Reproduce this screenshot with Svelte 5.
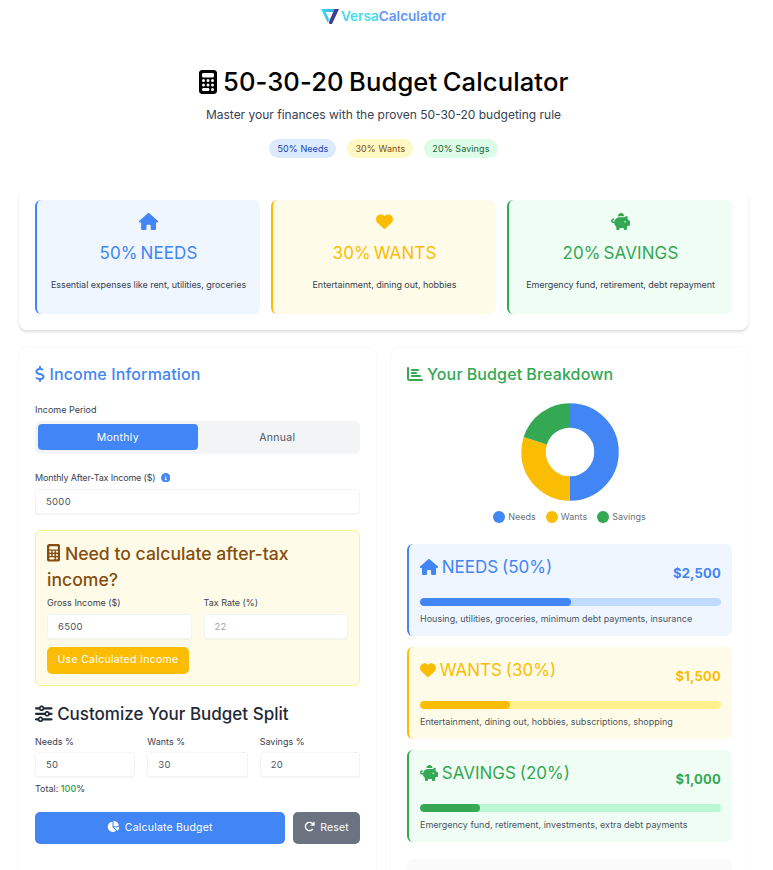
<script>
  const I = {
    calc: { v: '0 0 384 512', d: 'M64 0C28.700 0 0 28.700 0 64V448c0 35.300 28.700 64 64 64H320c35.300 0 64-28.700 64-64V64c0-35.300-28.700-64-64-64H64zM96 64H288c17.700 0 32 14.300 32 32v32c0 17.700-14.300 32-32 32H96c-17.700 0-32-14.300-32-32V96c0-17.700 14.300-32 32-32zm32 160a32 32 0 1 1 -64 0 32 32 0 1 1 64 0zM96 352a32 32 0 1 1 0-64 32 32 0 1 1 0 64zM64 416c0-17.700 14.300-32 32-32h96c17.700 0 32 14.300 32 32s-14.300 32-32 32H96c-17.700 0-32-14.300-32-32zM192 256a32 32 0 1 1 0-64 32 32 0 1 1 0 64zm32 64a32 32 0 1 1 -64 0 32 32 0 1 1 64 0zm64-64a32 32 0 1 1 0-64 32 32 0 1 1 0 64zm32 64a32 32 0 1 1 -64 0 32 32 0 1 1 64 0zM288 448a32 32 0 1 1 0-64 32 32 0 1 1 0 64z' },
    home: { v: '0 0 576 512', d: 'M575.800 255.500c0 18-15 32.100-32 32.100h-32l.7 160.200c0 2.700-.2 5.400-.5 8.100V472c0 22.100-17.900 40-40 40H456c-1.100 0-2.200 0-3.300-.1c-1.400 .1-2.800 .1-4.200 .1H416 392c-22.100 0-40-17.900-40-40V448 384c0-17.700-14.300-32-32-32H256c-17.700 0-32 14.300-32 32v64 24c0 22.100-17.900 40-40 40H160 128.100c-1.500 0-3-.1-4.500-.2c-1.200 .1-2.400 .2-3.600 .2H104c-22.100 0-40-17.900-40-40V360c0-.9 0-1.900 .1-2.800V287.600H32c-18 0-32-14-32-32.100c0-9 3-17 10-24L266.400 8c7-7 15-8 22-8s15 2 21 7L564.800 231.500c8 7 12 15 11 24z' },
    heart: { v: '0 0 512 512', d: 'M47.600 300.400L228.300 469.100c7.500 7 17.400 10.900 27.700 10.900s20.200-3.900 27.700-10.900L464.400 300.400c30.400-28.300 47.600-68 47.600-109.500v-5.800c0-69.900-50.500-129.500-119.400-141C347 36.500 300.600 51.400 268 84L256 96 244 84c-32.600-32.600-79-47.500-124.600-39.900C50.500 55.600 0 115.200 0 185.100v5.800c0 41.500 17.200 81.200 47.600 109.500z' },
    piggy: { v: '0 0 576 512', d: 'M400 96l0 .7c-5.300-.4-10.600-.7-16-.7H256c-16.500 0-32.500 2.100-47.800 6c-.1-2-.2-4-.2-6c0-53 43-96 96-96s96 43 96 96zm-16 32c3.500 0 7 .1 10.400 .3c4.200 .3 8.400 .7 12.600 1.300C424.600 109.100 450.800 96 480 96h11.500c10.400 0 18 9.800 15.500 19.900l-13.800 55.200c15.800 14.800 28.700 32.800 37.500 52.900H544c17.700 0 32 14.300 32 32v96c0 17.700-14.300 32-32 32H512c-9.100 12.100-19.900 22.900-32 32v64c0 17.700-14.300 32-32 32H416c-17.700 0-32-14.300-32-32V448H256v32c0 17.700-14.300 32-32 32H192c-17.700 0-32-14.300-32-32V416c-34.900-26.200-58.700-66.300-63.200-112H68c-37.600 0-68-30.400-68-68s30.400-68 68-68h4c13.300 0 24 10.700 24 24s-10.700 24-24 24H68c-11 0-20 9-20 20s9 20 20 20H99.200c12.100-59.800 58.700-107.500 118.300-120.900c12.100-2.700 24.800-4.100 38.500-4.100H384zm64 136a24 24 0 1 0 -48 0 24 24 0 1 0 48 0z' },
    dollar: { v: '0 0 320 512', d: 'M160 0c17.700 0 32 14.300 32 32V67.700c1.600 .2 3.100 .4 4.700 .7c.4 .1 .7 .1 1.100 .2l48 8.800c17.400 3.200 28.900 19.900 25.700 37.200s-19.900 28.900-37.200 25.700l-47.500-8.700c-31.300-4.600-58.900-1.500-78.300 6.200s-27.200 18.300-29 28.100c-2 10.700-.5 16.700 1.200 20.400c1.800 3.900 5.500 8.300 12.800 13.200c16.300 10.700 41.300 17.700 73.700 26.300l2.900 .8c28.600 7.600 63.600 16.800 89.600 33.800c14.200 9.300 27.600 21.900 35.900 39.500c8.500 17.900 10.300 37.900 6.400 59.200c-6.900 38-33.100 63.400-65.600 76.700c-13.700 5.600-28.600 9.200-44.400 11V480c0 17.700-14.300 32-32 32s-32-14.300-32-32V445.100c-.4-.1-.9-.1-1.300-.2l-.2 0 0 0c-24.400-3.800-64.500-14.300-91.500-26.300c-16.100-7.200-23.400-26.100-16.200-42.200s26.100-23.400 42.200-16.200c20.900 9.300 55.300 18.500 75.200 21.600c31.900 4.700 58.200 2 76-5.300c16.900-6.900 24.600-16.900 26.800-28.900c1.900-10.600 .4-16.700-1.300-20.400c-1.900-4-5.600-8.400-13-13.300c-16.400-10.700-41.500-17.700-74-26.300l-2.800-.7 0 0C119.400 279.300 84.400 270 58.400 253c-14.200-9.300-27.500-22-35.800-39.600c-8.400-17.900-10.100-37.900-6.100-59.200C23.700 116 52.300 91.200 84.800 78.300c13.300-5.300 27.900-8.900 43.200-11V32c0-17.700 14.300-32 32-32z' },
    pie: { v: '0 0 576 512', d: 'M304 240V16.600c0-9 7-16.600 16-16.600C443.700 0 544 100.300 544 224c0 9-7.600 16-16.600 16H304zM32 272C32 150.700 122.100 50.300 239 34.300c9.200-1.300 17 6.100 17 15.400V288L412.500 444.500c6.700 6.700 6.200 17.700-1.500 23.100C371.800 495.600 323.800 512 272 512C139.500 512 32 404.600 32 272zm526.400 16c9.300 0 16.600 7.800 15.400 17c-7.700 55.900-34.600 105.600-73.900 142.300c-6 5.600-15.400 5.200-21.200-.7L320 288H558.400z' },
    redo: { v: '0 0 512 512', d: 'M386.300 160H336c-17.700 0-32 14.300-32 32s14.300 32 32 32H464c17.700 0 32-14.300 32-32V64c0-17.700-14.300-32-32-32s-32 14.300-32 32v51.200L414.400 97.600c-87.500-87.500-229.300-87.500-316.800 0s-87.500 229.300 0 316.800s229.300 87.500 316.800 0c12.500-12.500 12.500-32.800 0-45.300s-32.800-12.500-45.300 0c-62.500 62.500-163.800 62.500-226.300 0s-62.500-163.800 0-226.300s163.800-62.500 226.300 0L386.300 160z' },
    bars: { v: '0 0 512 512', d: 'M32 32c17.700 0 32 14.300 32 32V400c0 8.800 7.200 16 16 16H480c17.700 0 32 14.300 32 32s-14.300 32-32 32H80c-44.200 0-80-35.800-80-80V64C0 46.300 14.300 32 32 32zm96 96c0-17.700 14.300-32 32-32l192 0c17.700 0 32 14.300 32 32s-14.300 32-32 32l-192 0c-17.700 0-32-14.300-32-32zm32 64H288c17.700 0 32 14.300 32 32s-14.300 32-32 32H160c-17.700 0-32-14.300-32-32s14.300-32 32-32zm0 96H416c17.700 0 32 14.300 32 32s-14.300 32-32 32H160c-17.700 0-32-14.300-32-32s14.300-32 32-32z' },
    sliders: { v: '0 0 512 512', d: 'M0 416c0 17.700 14.300 32 32 32l54.700 0c12.300 28.300 40.500 48 73.300 48s61-19.700 73.300-48L480 448c17.700 0 32-14.300 32-32s-14.300-32-32-32l-246.700 0c-12.300-28.300-40.500-48-73.300-48s-61 19.700-73.300 48L32 384c-17.700 0-32 14.300-32 32zm128 0a32 32 0 1 1 64 0 32 32 0 1 1 -64 0zM320 256a32 32 0 1 1 64 0 32 32 0 1 1 -64 0zm32-80c-32.800 0-61 19.700-73.300 48L32 224c-17.700 0-32 14.300-32 32s14.300 32 32 32l246.700 0c12.300 28.300 40.500 48 73.300 48s61-19.700 73.300-48l54.700 0c17.700 0 32-14.300 32-32s-14.300-32-32-32l-54.700 0c-12.300-28.300-40.500-48-73.300-48zM192 128a32 32 0 1 1 0-64 32 32 0 1 1 0 64zm73.300-64C253 35.700 224.800 16 192 16s-61 19.700-73.300 48L32 64C14.300 64 0 78.300 0 96s14.300 32 32 32l86.700 0c12.300 28.300 40.500 48 73.300 48s61-19.700 73.300-48L480 128c17.700 0 32-14.300 32-32s-14.300-32-32-32L265.300 64z' },
    info: { v: '0 0 512 512', d: 'M256 512A256 256 0 1 0 256 0a256 256 0 1 0 0 512zM216 336h24V272H216c-13.300 0-24-10.700-24-24s10.700-24 24-24h48c13.300 0 24 10.700 24 24v88h8c13.300 0 24 10.700 24 24s-10.700 24-24 24H216c-13.300 0-24-10.700-24-24s10.700-24 24-24zm40-208a32 32 0 1 1 0 64 32 32 0 1 1 0-64z' }
  };
  const explain = [
    { c: 'blue', i: 'home', t: '50% NEEDS', d: 'Essential expenses like rent, utilities, groceries' },
    { c: 'yellow', i: 'heart', t: '30% WANTS', d: 'Entertainment, dining out, hobbies' },
    { c: 'green', i: 'piggy', t: '20% SAVINGS', d: 'Emergency fund, retirement, debt repayment' }
  ];
  const pills = [
    { c: 'p-blue', t: '50% Needs' },
    { c: 'p-yellow', t: '30% Wants' },
    { c: 'p-green', t: '20% Savings' }
  ];
  const results = [
    { c: 'blue', i: 'home', t: 'NEEDS (50%)', a: '$2,500', w: 50, d: 'Housing, utilities, groceries, minimum debt payments, insurance' },
    { c: 'yellow', i: 'heart', t: 'WANTS (30%)', a: '$1,500', w: 30, d: 'Entertainment, dining out, hobbies, subscriptions, shopping' },
    { c: 'green', i: 'piggy', t: 'SAVINGS (20%)', a: '$1,000', w: 20, d: 'Emergency fund, retirement, investments, extra debt payments' }
  ];
  const split = [
    { l: 'Needs %', v: '50' },
    { l: 'Wants %', v: '30' },
    { l: 'Savings %', v: '20' }
  ];
  const legend = [
    { c: 'd-blue', t: 'Needs' },
    { c: 'd-yellow', t: 'Wants' },
    { c: 'd-green', t: 'Savings' }
  ];
</script>

{#snippet icon(n, cls)}
  <svg class="ic {cls}" viewBox={I[n].v} aria-hidden="true"><path d={I[n].d} fill="currentColor" /></svg>
{/snippet}

<div class="page">
  <header class="logo">
    <svg class="logo-mark" viewBox="0 0 18 15" aria-hidden="true">
      <defs>
        <linearGradient id="lg" x1="0" y1="0" x2="1" y2="0">
          <stop offset="0" stop-color="#35e3e6" />
          <stop offset="1" stop-color="#3fa8e0" />
        </linearGradient>
      </defs>
      <path d="M0 0h14l-2 3H4.500l3.500 7-1 4z" fill="url(#lg)" />
      <path d="M13.500 0H18l-7 15H8.500l-.6-2z" fill="#3d3f92" />
    </svg>
    <span class="logo-text"><span class="versa">Versa</span><span class="calcw">Calculator</span></span>
  </header>

  <section class="hero">
    <h1>{@render icon('calc', 'h1-ic')} 50-30-20 Budget Calculator</h1>
    <p>Master your finances with the proven 50-30-20 budgeting rule</p>
    <div class="pills">
      {#each pills as p}<span class="pill {p.c}">{p.t}</span>{/each}
    </div>
  </section>

  <section class="explain card">
    {#each explain as e}
      <div class="ex {e.c}">
        {@render icon(e.i, 'ex-ic')}
        <h3>{e.t}</h3>
        <p>{e.d}</p>
      </div>
    {/each}
  </section>

  <div class="cols">
    <section class="col card">
      <h2 class="h-blue">{@render icon('dollar', 'h2-ic')} Income Information</h2>
      <div class="lab lab-first">Income Period</div>
      <div class="toggle">
        <div class="tg on">Monthly</div>
        <div class="tg off">Annual</div>
      </div>
      <div class="lab lab-second">Monthly After-Tax Income ($) {@render icon('info', 'info')}</div>
      <div class="inp">5000</div>

      <div class="tax">
        <h4>{@render icon('calc', 'tax-ic')} Need to calculate after-tax income?</h4>
        <div class="tax-grid">
          <div><div class="lab">Gross Income ($)</div><div class="inp">6500</div></div>
          <div><div class="lab">Tax Rate (%)</div><div class="inp ph">22</div></div>
        </div>
        <div class="use">Use Calculated Income</div>
      </div>

      <h3 class="cust">{@render icon('sliders', 'sl-ic')} Customize Your Budget Split</h3>
      <div class="split">
        {#each split as s}
          <div><div class="lab tight">{s.l}</div><div class="inp">{s.v}</div></div>
        {/each}
      </div>
      <div class="total">Total: <b>100</b>%</div>
      <div class="actions">
        <div class="btn calc">{@render icon('pie', 'btn-ic')} Calculate Budget</div>
        <div class="btn reset">{@render icon('redo', 'btn-ic')} Reset</div>
      </div>
    </section>

    <section class="col card">
      <h2 class="h-green">{@render icon('bars', 'h2-ic')} Your Budget Breakdown</h2>
      <div class="chart">
        <svg viewBox="0 0 98 98" class="donut" aria-hidden="true">
          <circle cx="49" cy="49" r="36.500" fill="none" stroke="#4285f4" stroke-width="24.500" pathLength="100" stroke-dasharray="50 50" transform="rotate(-90 49 49)" />
          <circle cx="49" cy="49" r="36.500" fill="none" stroke="#fbbc04" stroke-width="24.500" pathLength="100" stroke-dasharray="30 70" transform="rotate(90 49 49)" />
          <circle cx="49" cy="49" r="36.500" fill="none" stroke="#34a853" stroke-width="24.500" pathLength="100" stroke-dasharray="20 80" transform="rotate(198 49 49)" />
        </svg>
        <div class="legend">
          {#each legend as l}
            <span class="lg"><i class="dot {l.c}"></i>{l.t}</span>
          {/each}
        </div>
      </div>

      {#each results as r}
        <div class="res {r.c}">
          <div class="res-top">
            <div class="res-t">{@render icon(r.i, 'res-ic')} {r.t}</div>
            <div class="res-a">{r.a}</div>
          </div>
          <div class="track"><div class="fill" style="width: {r.w}%"></div></div>
          <div class="res-d">{r.d}</div>
        </div>
      {/each}
      <div class="tips"></div>
    </section>
  </div>
</div>

<style>
  :global(html), :global(body) { margin: 0; background: #fff; overflow: hidden; }
  .page {
    height: 870px; overflow: hidden; box-sizing: border-box; padding: 0 25px 0 19px;
    font-family: Inter, "Noto Sans", sans-serif; color: #374151;
  }
  * { box-sizing: border-box; }
  .ic { display: inline-block; vertical-align: -0.125em; height: 1em; }
  .logo { display: flex; justify-content: center; align-items: center; gap: 2px; height: 33px; padding-bottom: 1px; }
  .logo-mark { width: 18px; height: 15px; }
  .logo-text { font-size: 13.6px; font-weight: 600; }
  .versa { color: #3fe0ea; }
  .calcw { color: #5f96f6; }

  .hero { text-align: center; padding-top: 33px; height: 157px; }
  h1 { margin: 0; font-size: 25.6px; line-height: 32px; font-weight: 500; color: #000; word-spacing: -1.5px; letter-spacing: 0.1px; }
  .h1-ic { height: 24px; vertical-align: -3px; margin-right: 1px; }
  .hero p { margin: 8px 0 0; font-size: 12px; line-height: 18px; color: #374151; }
  .pills { display: flex; gap: 11px; justify-content: center; margin-top: 15px; }
  .pill { height: 19px; padding: 0 8px; border-radius: 10px; font-size: 9px; line-height: 19px; letter-spacing: 0.1px; }
  .p-blue { background: #dbeafe; color: #1e40af; }
  .p-yellow { background: #fef9c3; color: #854d0e; }
  .p-green { background: #dcfce7; color: #166534; }

  .card { background: #fff; border-radius: 8px; }
  .explain { display: grid; grid-template-columns: repeat(3, 1fr); gap: 11px; padding: 10px 16px 16px; height: 140px; box-shadow: 0 2px 3px rgba(0,0,0,0.14); }
  .ex { border-left: 2px solid var(--c); background: var(--bg); border-radius: 6px; height: 114px; text-align: center; padding-top: 13px; }
  .ex-ic { height: 17px; display: block; margin: 0 auto; color: var(--c); }
  .ex h3 { margin: 12px 0 0; font-size: 17px; line-height: 22px; font-weight: 400; word-spacing: -2px; color: var(--c); letter-spacing: 0.1px; }
  .ex p { margin: 14px 0 0; font-size: 9px; line-height: 14px; color: #374151; letter-spacing: -0.05px; }
  .blue { --c: #4285f4; --bg: #eff6ff; --tr: #bfdbfe; }
  .yellow { --c: #fbbc04; --bg: #fefce8; --tr: #fef08a; }
  .green { --c: #34a853; --bg: #f0fdf4; --tr: #bbf7d0; }

  .cols { display: grid; grid-template-columns: 357px 357px; gap: 15px; margin-top: 18px; }
  .col { padding: 16px; height: 600px; box-shadow: 0 0 3px rgba(0,0,0,0.05); }
  h2 { margin: -1px 0 0; font-size: 16px; line-height: 22px; font-weight: 500; letter-spacing: 0.15px; }
  .h-blue { color: #4285f4; }
  .h-green { color: #34a853; word-spacing: -0.5px; }
  .h2-ic { height: 16px; vertical-align: -2px; }
  .lab { font-size: 9px; line-height: 14px; color: #374151; margin-bottom: 4px; }
  .lab.tight { margin-bottom: 3px; }
  .lab-first { margin-top: 18px; }
  .lab-second { margin-top: 18px; letter-spacing: -0.15px; }
  .info { height: 9.5px; width: 9.5px; color: #4285f4; margin-left: 3px; vertical-align: -1px; }
  .toggle { display: flex; background: #f3f4f6; border-radius: 6px; padding: 3px; height: 32px; box-shadow: 0 1px 1px rgba(0,0,0,0.04); }
  .tg { flex: 1; text-align: center; font-size: 10.5px; line-height: 27px; letter-spacing: 0.3px; border-radius: 4px; }
  .on { background: #4285f4; color: #fff; }
  .off { color: #4b5563; }
  .inp { height: 25px; background: #fff; border: 1px solid #f3f4f6; border-radius: 3px; padding-left: 10px; font-size: 9.5px; line-height: 23px; letter-spacing: 0.3px; color: #4b5563; box-shadow: 0 1px 1px rgba(0,0,0,0.04); }
  .ph { color: #9ca3af; }
  .tax { margin-top: 16px; background: #fefce8; border: 1px solid #fef08a; border-radius: 6px; padding: 10px 11px 11px; height: 156px; }
  .tax h4 { margin: 0; font-size: 17.6px; line-height: 26.4px; font-weight: 500; color: #854d0e; }
  .tax-ic { height: 17.6px; vertical-align: -2px; }
  .tax-grid { display: grid; grid-template-columns: 1fr 1fr; gap: 12px; margin-top: 2px; }
  .use { display: inline-block; height: 27px; margin-top: 8px; padding: 0 10.500px; background: #fbbc04; color: #fff; font-size: 10.5px; line-height: 26px; letter-spacing: 0.3px; border-radius: 5px; }
  .cust { margin: 17px 0 0; font-size: 17px; line-height: 22px; font-weight: 500; color: #1f2937; }
  .sl-ic { height: 17.6px; vertical-align: -3px; }
  .split { display: grid; grid-template-columns: repeat(3, 1fr); gap: 12px; margin-top: 10px; }
  .total { font-size: 9px; line-height: 14px; margin-top: 5px; color: #374151; }
  .total b { color: #16a34a; font-weight: 500; }
  .actions { display: flex; gap: 8px; margin-top: 16px; }
  .btn { height: 32px; border-radius: 5px; color: #fff; text-align: center; font-size: 10.5px; line-height: 32px; letter-spacing: 0.2px; }
  .calc { flex: 1; background: #4285f4; }
  .reset { width: 67px; background: #6b7280; }
  .btn-ic { height: 11px; vertical-align: -1px; margin-right: 2px; }

  .chart { text-align: center; margin-top: 18px; height: 141px; }
  .donut { width: 98px; height: 98px; display: block; margin: 0 auto; }
  .legend { display: flex; justify-content: center; gap: 10px; margin-top: 9px; font-size: 9px; line-height: 13px; color: #6b7280; }
  .lg { display: flex; align-items: center; gap: 3px; }
  .dot { width: 12px; height: 12px; border-radius: 50%; display: block; }
  .d-blue { background: #4285f4; }
  .d-yellow { background: #fbbc04; }
  .d-green { background: #34a853; }

  .res { border-left: 2px solid var(--c); background: var(--bg); border-radius: 6px; padding: 11px 11px 0 11px; height: 92px; margin-bottom: 11px; }
  .res-top { display: flex; justify-content: space-between; height: 43px; color: var(--c); }
  .res-t { font-size: 17px; line-height: 24px; font-weight: 400; word-spacing: -1px; }
  .res-ic { height: 16px; vertical-align: -2px; }
  .res-a { font-size: 13px; font-weight: 700; line-height: 18px; margin-top: 9px; letter-spacing: 0.2px; }
  .track { height: 8px; border-radius: 4px; background: var(--tr); overflow: hidden; }
  .fill { height: 100%; border-radius: 4px; background: var(--c); }
  .res-d { font-size: 9px; line-height: 14px; margin-top: 6px; color: #4b5563; }
  .tips { height: 40px; border-radius: 6px; background: #fafafa; margin-top: 17px; }
</style>
